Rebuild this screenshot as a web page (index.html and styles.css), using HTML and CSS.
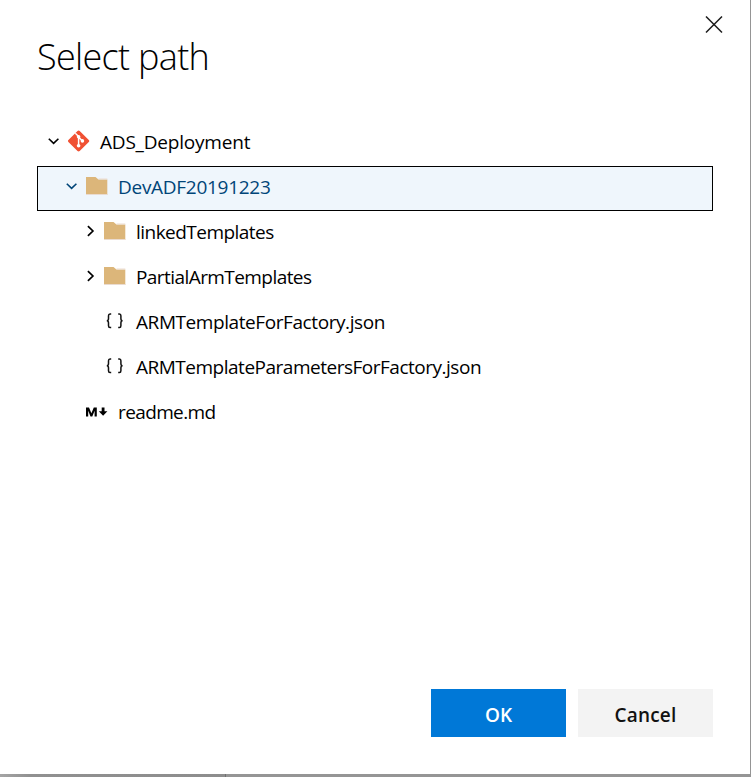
FILE: index.html
```html
<!DOCTYPE html>
<html lang="en">
<head>
<meta charset="utf-8">
<title>Select path</title>
<link rel="stylesheet" href="styles.css">
</head>
<body>
<svg class="defs" width="0" height="0">
  <symbol id="down" viewBox="0 0 12 12"><path d="M.8 3.7 5.6 8.4l4.8-4.7" fill="none" stroke="currentColor" stroke-width="1.6"/></symbol>
  <symbol id="right" viewBox="0 0 12 12"><path d="M3.9 1.2 8.9 6l-5 4.8" fill="none" stroke="currentColor" stroke-width="1.7"/></symbol>
  <symbol id="folder" viewBox="0 0 22 20"><path d="M0 1H9.5l3 2.5H21.3V19H0z" fill="#dcb67a"/><path d="M0 18.5H21.3M12.5 3H21.3" stroke="#eadbd0"/></symbol>
  <symbol id="braces" viewBox="0 0 20 16"><path d="M6.2 1H5Q3.5 1 3.5 2.8V5.5Q3.5 7.8 1.8 7.8Q3.5 7.8 3.5 10V12.8Q3.5 14.6 5 14.6H6.2M13.2 1H14.4Q15.9 1 15.9 2.8V5.5Q15.9 7.8 17.6 7.8Q15.9 7.8 15.9 10V12.8Q15.9 14.6 14.4 14.6H13.2" fill="none" stroke="#111" stroke-width="1.5"/></symbol>
</svg>
<main class="dialog">
  <header class="header">
    <h1 class="title">Select path</h1>
    <button class="close" aria-label="Close"><svg width="18" height="18" viewBox="0 0 18 18"><path d="M1 .5 17 16.5M17 .5 1 16.5" stroke="#1b1b1b" stroke-width="1.5"/></svg></button>
  </header>
  <div class="tree">
    <div class="row">
      <svg class="chevron"><use href="#down"/></svg>
      <svg class="icon git" viewBox="0 0 22 22"><path d="M10.6.4Q11.2.4 11.7.9L20.8 9.9Q21.7 11 20.8 12.1L11.7 21.1Q10.6 22 9.5 21.1L.4 12.1Q-.5 11 .4 9.9L9.5.9Q10 .4 10.6.4z" fill="#f05133"/><path d="M7.3 3.2 10.6 6.6V16M10.6 7 14.1 10.7" fill="none" stroke="#fff" stroke-width="1.5"/><g fill="#fff"><circle cx="10.6" cy="6.8" r="1.8"/><circle cx="14.4" cy="10.9" r="1.8"/><circle cx="10.6" cy="15.7" r="1.8"/></g></svg>
      <span class="label root">ADS_Deployment</span>
    </div>
    <div class="row level1 selected">
      <svg class="chevron"><use href="#down"/></svg>
      <svg class="icon"><use href="#folder"/></svg>
      <span class="label dev">DevADF20191223</span>
    </div>
    <div class="row level2">
      <svg class="chevron"><use href="#right"/></svg>
      <svg class="icon"><use href="#folder"/></svg>
      <span class="label linked">linkedTemplates</span>
    </div>
    <div class="row level2">
      <svg class="chevron"><use href="#right"/></svg>
      <svg class="icon"><use href="#folder"/></svg>
      <span class="label partial">PartialArmTemplates</span>
    </div>
    <div class="row level2">
      <span class="chevron"></span>
      <svg class="icon braces"><use href="#braces"/></svg>
      <span class="label factory">ARMTemplateForFactory.json</span>
    </div>
    <div class="row level2">
      <span class="chevron"></span>
      <svg class="icon braces"><use href="#braces"/></svg>
      <span class="label params">ARMTemplateParametersForFactory.json</span>
    </div>
    <div class="row level1">
      <span class="chevron"></span>
      <svg class="icon markdown" viewBox="0 0 22 12"><path d="M0 10.5V1.5H3L5.4 7.3 7.8 1.5H10.8V10.5H8.6V4.8L6.3 10.5H4.5L2.2 4.8V10.5z"/><path d="M15.7 1.5H18.5V5.2H21.4L17.1 9.8 12.8 5.2H15.7z"/></svg>
      <span class="label readme">readme.md</span>
    </div>
  </div>
  <footer class="footer">
    <button class="button primary">OK</button>
    <button class="button cancel">Cancel</button>
  </footer>
</main>
</body>
</html>
```
FILE: styles.css
```css
* { box-sizing: border-box; }
body {
  margin: 0;
  height: 777px;
  overflow: hidden;
  background: linear-gradient(90deg, #a5a5a5, #909090 30px, #8d8d8d 225px, #707070 225px, #707070 226px, #959595 226px);
  font-family: "Open Sans", "Noto Sans", sans-serif;
}
.defs { position: absolute; }
.dialog {
  width: 750px;
  height: 774px;
  display: flex;
  flex-direction: column;
  padding: 0 37px 37px;
  background: #fff;
}
.header {
  height: 121px;
  display: flex;
  justify-content: space-between;
  align-items: flex-start;
}
.title {
  margin: 32px 0 0;
  font-size: 36px;
  line-height: 50px;
  font-weight: 300;
  letter-spacing: -0.68px;
  color: #000;
  white-space: nowrap;
}
.close {
  margin: 16px -10px 0 0;
  padding: 0;
  width: 18px;
  height: 18px;
  border: 0;
  background: none;
}
.close svg { display: block; }
.tree { flex: 1; }
.row {
  height: 45px;
  display: flex;
  align-items: center;
  padding: 0 0 4px 11px;
  color: #000;
}
.level1 { padding-left: 29px; }
.level2 { padding-left: 47px; }
.selected {
  padding-left: 28px;
  border: 1px solid #000;
  background: #eff6fc;
  color: #004578;
}
.chevron { flex: none; width: 12px; height: 12px; margin-top: -1px; }
.icon { flex: none; width: 22px; height: 20px; margin: -1px 10px 0 8px; }
.git { height: 22px; }
.braces { width: 20px; height: 16px; margin: -1px 11px 0 9px; }
.markdown { height: 12px; margin-top: 0; }
.label { font-size: 19px; line-height: 28px; white-space: nowrap; }
.root { letter-spacing: -0.2px; }
.dev { letter-spacing: -0.28px; }
.linked { letter-spacing: -0.53px; }
.partial { letter-spacing: -0.57px; }
.factory { letter-spacing: -0.42px; }
.params { letter-spacing: -0.49px; }
.readme { letter-spacing: -0.62px; }
.footer { display: flex; justify-content: flex-end; gap: 12px; }
.button {
  width: 135px;
  height: 48px;
  padding: 3px 0 0;
  border: 0;
  background: #f3f3f3;
  color: #111;
  font: 600 19px "Open Sans", sans-serif;
}
.cancel { letter-spacing: 0.2px; }
.primary { background: #0078d7; color: #fff; }
```
